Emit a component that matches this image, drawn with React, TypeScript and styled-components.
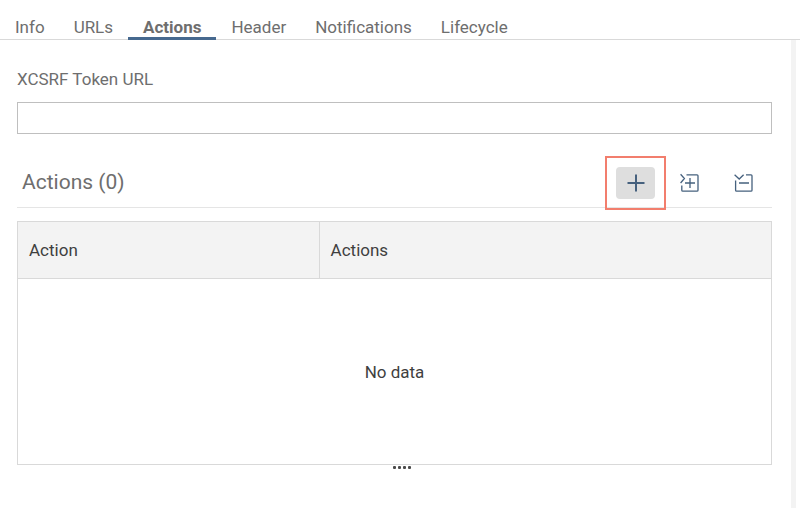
import React, { useState } from "react";
import styled, { createGlobalStyle } from "styled-components";

const GlobalStyle = createGlobalStyle`
  *, *::before, *::after { box-sizing: border-box; }
  body {
    margin: 0;
    background: #fff;
    color: #3f3f3f;
    font-family: "72", Roboto, "Liberation Sans", sans-serif;
    font-size: 17px;
    line-height: 20px;
  }
  button, input { font: inherit; color: inherit; }
`;

const Page = styled.div`
  display: flex;
  flex-direction: column;
  min-height: 100vh;
`;

const TabBar = styled.nav`
  display: flex;
  gap: 1px;
  padding: 13px 1px 0;
  border-bottom: 1px solid #d9d9d9;
`;

const Tab = styled.button<{ $active: boolean }>`
  height: 27px;
  margin-bottom: -1px;
  padding: 3px ${(p) => (p.$active ? 15 : 14)}px 0;
  border: 0;
  border-bottom: 3px solid ${(p) => (p.$active ? "#46698f" : "transparent")};
  background: none;
  color: #6e6e6e;
  font-weight: ${(p) => (p.$active ? 700 : 400)};
  line-height: 20px;
  cursor: pointer;
`;

const Body = styled.div`
  display: flex;
  flex: 1;
`;

const Content = styled.main`
  flex: 1;
  min-width: 0;
  padding: 29px 19px 16px 17px;
`;

const Gutter = styled.div`
  width: 5px;
  margin-right: 4px;
  background: #f3f3f3;
`;

const Label = styled.label`
  display: block;
  margin-bottom: 13px;
  color: #6e6e6e;
`;

const TextInput = styled.input`
  display: block;
  width: 100%;
  height: 32px;
  padding: 0 10px;
  border: 1px solid #bfbfbf;
  border-radius: 0;
  background: #fff;
  outline: 0;
`;

const Toolbar = styled.div`
  display: flex;
  align-items: center;
  gap: 15px;
  height: 49px;
  margin-top: 25px;
  padding: 0 9px 0 5px;
  border-bottom: 1px solid #e5e5e5;
`;

const Title = styled.h2`
  flex: 1;
  margin: 0;
  padding-bottom: 2px;
  color: #6e6e6e;
  font-size: 21px;
  font-weight: 400;
  line-height: 24px;
`;

const IconButton = styled.button<{ $filled?: boolean }>`
  position: relative;
  display: flex;
  align-items: center;
  justify-content: center;
  width: 39px;
  height: 32px;
  padding: 0;
  border: 0;
  border-radius: 4px;
  background: ${(p) => (p.$filled ? "#dedede" : "transparent")};
  color: #46617e;
  cursor: pointer;
`;

const Highlight = styled.span`
  position: absolute;
  inset: -11px;
  border: 2px solid #f27e6d;
  pointer-events: none;
`;

const Table = styled.table`
  width: 100%;
  margin-top: 13px;
  border: 1px solid #d9d9d9;
  border-collapse: collapse;
  table-layout: fixed;
`;

const HeadCell = styled.th<{ $width?: string }>`
  width: ${(p) => p.$width ?? "auto"};
  height: 57px;
  padding: 0 11px;
  border: 1px solid #d9d9d9;
  background: #f3f3f3;
  font-weight: 400;
  text-align: left;
`;

const EmptyCell = styled.td`
  height: 186px;
  padding: 0;
  text-align: center;
`;

const ResizeHandle = styled.div`
  display: flex;
  justify-content: center;
  gap: 2px;
  padding: 1px 0 0 15px;
`;

const Dot = styled.span`
  width: 3px;
  height: 3px;
  border-radius: 1px;
  background: #4a4a4a;
`;

const PlusIcon = () => (
  <svg width="18" height="18" viewBox="0 0 18 18" fill="none" stroke="currentColor" strokeWidth="2" aria-hidden="true">
    <path d="M0.5 9H17.5M9 0.5V17.5" />
  </svg>
);

const ExpandIcon = () => (
  <svg width="20" height="20" viewBox="0 0 20 20" fill="none" stroke="currentColor" strokeWidth="1.3" aria-hidden="true">
    <path d="M0.6 1.2L4.4 5.5L0.6 10M6.5 1.8H17Q18 1.8 18 2.8V17.2Q18 18.2 17 18.2H2.8Q1.8 18.2 1.8 17.2V12.5M5 10H15M10 5V15" />
  </svg>
);

const CollapseIcon = () => (
  <svg width="20" height="20" viewBox="0 0 20 20" fill="none" stroke="currentColor" strokeWidth="1.3" aria-hidden="true">
    <path d="M0.6 1.8L5.2 6L9.6 1.8M12 1.8H17Q18 1.8 18 2.8V17.2Q18 18.2 17 18.2H2.6Q1.6 18.2 1.6 17.2V7.5M5 10H15" />
  </svg>
);

const tabs = ["Info", "URLs", "Actions", "Header", "Notifications", "Lifecycle"];

export default function App() {
  const [active, setActive] = useState("Actions");
  const [url, setUrl] = useState("");
  return (
    <Page>
      <GlobalStyle />
      <TabBar role="tablist">
        {tabs.map((name) => (
          <Tab key={name} role="tab" aria-selected={name === active} $active={name === active} onClick={() => setActive(name)}>
            {name}
          </Tab>
        ))}
      </TabBar>
      <Body>
        <Content>
          <Label htmlFor="token-url">XCSRF Token URL</Label>
          <TextInput id="token-url" value={url} onChange={(e) => setUrl(e.target.value)} />
          <Toolbar>
            <Title>Actions (0)</Title>
            <IconButton $filled aria-label="Add action">
              <PlusIcon />
              <Highlight />
            </IconButton>
            <IconButton aria-label="Expand all">
              <ExpandIcon />
            </IconButton>
            <IconButton aria-label="Collapse all">
              <CollapseIcon />
            </IconButton>
          </Toolbar>
          <Table>
            <thead>
              <tr>
                <HeadCell scope="col" $width="40%">Action</HeadCell>
                <HeadCell scope="col">Actions</HeadCell>
              </tr>
            </thead>
            <tbody>
              <tr>
                <EmptyCell colSpan={2}>No data</EmptyCell>
              </tr>
            </tbody>
          </Table>
          <ResizeHandle>
            <Dot />
            <Dot />
            <Dot />
            <Dot />
          </ResizeHandle>
        </Content>
        <Gutter />
      </Body>
    </Page>
  );
}
